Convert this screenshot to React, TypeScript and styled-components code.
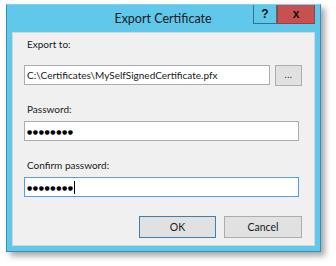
import React from 'react';
import styled, { createGlobalStyle } from 'styled-components';

const Global = createGlobalStyle`
  html, body {
    margin: 0;
    padding: 0;
    background: #ffffff;
  }
  body {
    font-family: Lato, 'Open Sans', 'Liberation Sans', sans-serif;
  }
`;

const Page = styled.div`
  width: 336px;
  height: 266px;
  padding: 4px 0 0 6px;
  box-sizing: border-box;
`;

const Window = styled.div`
  width: 315px;
  height: 248px;
  box-sizing: border-box;
  background: #60c8ea;
  border: 1px solid #3a8fb0;
  border-top-color: #7fd3ee;
  box-shadow: 4px 4px 6px rgba(0, 0, 0, 0.35);
  display: flex;
  flex-direction: column;
  padding: 0 5px 5px 5px;
`;

const TitleBar = styled.div`
  height: 27px;
  display: flex;
  align-items: flex-start;
`;

const Title = styled.div`
  flex: 1;
  text-align: center;
  font-size: 12.5px;
  line-height: 27px;
  color: #1a1a1a;
  padding-left: 61px;
`;

const CaptionButton = styled.div<{ $close?: boolean }>`
  width: ${(p) => (p.$close ? '38px' : '24px')};
  height: 19px;
  box-sizing: border-box;
  background: ${(p) => (p.$close ? '#c75050' : '#60c8ea')};
  border: 1px solid ${(p) => (p.$close ? '#a33d3d' : '#3b6f85')};
  border-top: none;
  display: flex;
  align-items: center;
  justify-content: center;
  font-family: 'Liberation Sans', sans-serif;
  font-weight: bold;
  font-size: 12px;
  color: #111;
`;

const Content = styled.div`
  flex: 1;
  background: #f0f0f0;
  border: 1px solid #d6d6d6;
  padding: 0 12px 0 11px;
  display: flex;
  flex-direction: column;
  font-size: 10px;
  color: #1a1a1a;
`;

const Label = styled.div<{ $top: number }>`
  margin-top: ${(p) => p.$top}px;
  padding-left: 3px;
  line-height: 16px;
  height: 16px;
`;

const Row = styled.div<{ $top: number }>`
  display: flex;
  gap: 5px;
  margin-top: ${(p) => p.$top}px;
`;

const TextBox = styled.div<{ $width: number; $focus?: boolean }>`
  width: ${(p) => p.$width}px;
  height: 20px;
  box-sizing: border-box;
  background: #fff;
  border: 1px solid ${(p) => (p.$focus ? '#569de5' : '#abadb3')};
  display: flex;
  align-items: center;
  padding-left: 2px;
  font-size: 10px;
  white-space: nowrap;
`;

const Dots = styled.span`
  font-family: 'DejaVu Sans', sans-serif;
  font-size: 6px;
  letter-spacing: 0.6px;
  color: #000;
`;

const Caret = styled.span`
  display: inline-block;
  width: 1px;
  height: 13px;
  background: #000;
`;

const Button = styled.div<{ $width: number; $default?: boolean }>`
  width: ${(p) => p.$width}px;
  height: 22px;
  box-sizing: border-box;
  background: #e1e1e1;
  border: 1px solid ${(p) => (p.$default ? '#3c7fb1' : '#adadad')};
  display: flex;
  align-items: center;
  justify-content: center;
  font-size: 10.5px;
  color: #1a1a1a;
`;

const SmallButton = styled(Button)`
  height: 21px;
  align-items: flex-end;
  padding-bottom: 5px;
  font-size: 9px;
  letter-spacing: 0.5px;
`;

const Footer = styled.div`
  display: flex;
  justify-content: flex-end;
  gap: 8px;
  margin-top: 19px;
`;

export default function App() {
  return (
    <>
      <Global />
      <Page>
        <Window>
          <TitleBar>
            <Title>Export Certificate</Title>
            <CaptionButton>?</CaptionButton>
            <CaptionButton $close>x</CaptionButton>
          </TitleBar>
          <Content>
            <Label $top={3}>Export to:</Label>
            <Row $top={13}>
              <TextBox $width={246}>C:\Certificates\MySelfSignedCertificate.pfx</TextBox>
              <SmallButton $width={27}>...</SmallButton>
            </Row>
            <Label $top={15}>Password:</Label>
            <Row $top={4}>
              <TextBox $width={275}>
                <Dots>●●●●●●●●</Dots>
              </TextBox>
            </Row>
            <Label $top={16}>Confirm password:</Label>
            <Row $top={4}>
              <TextBox $width={275} $focus>
                <Dots>●●●●●●●●</Dots>
                <Caret />
              </TextBox>
            </Row>
            <Footer>
              <Button $width={77} $default>OK</Button>
              <Button $width={78}>Cancel</Button>
            </Footer>
          </Content>
        </Window>
      </Page>
    </>
  );
}
